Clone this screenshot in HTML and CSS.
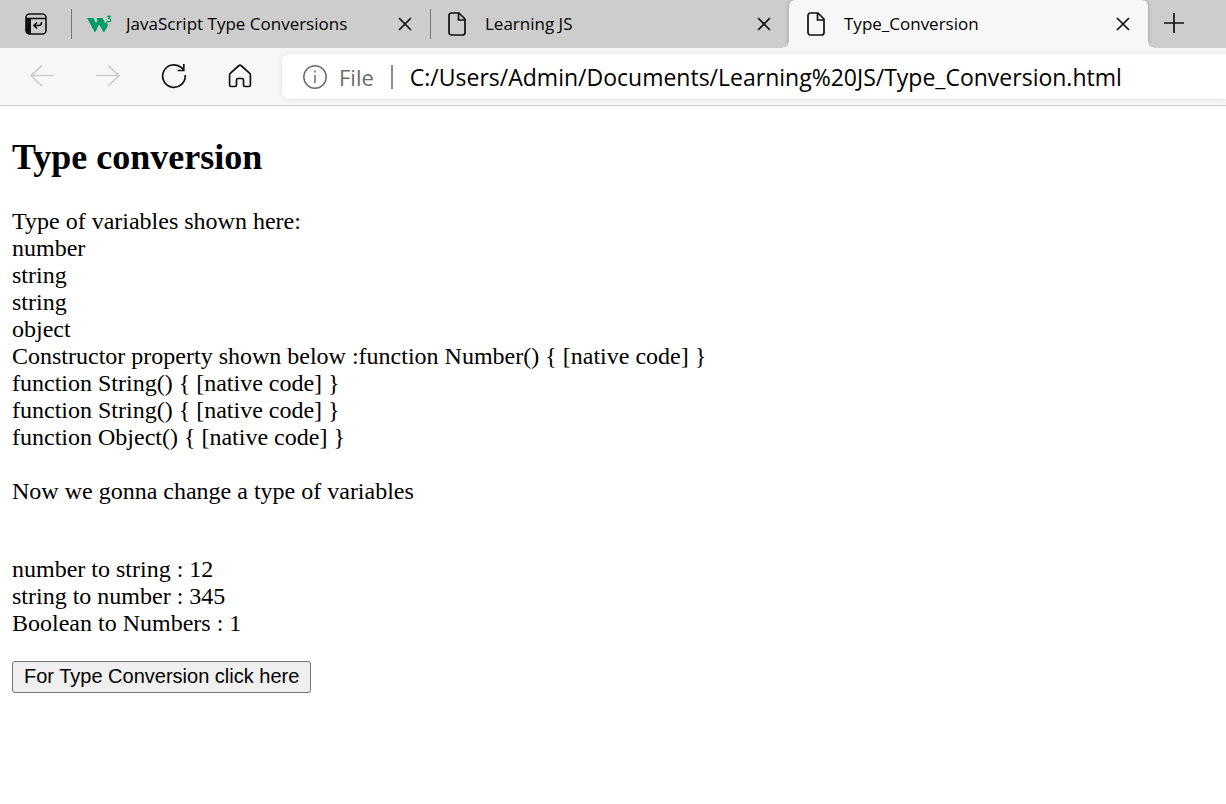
FILE: index.html
```html
<!DOCTYPE html>
<html lang="en">
<head>
<meta charset="utf-8">
<title>Type_Conversion</title>
<link rel="stylesheet" href="styles.css">
</head>
<body>
<header class="browser">
  <div class="tabstrip">
    <button class="tab-actions" aria-label="Tab actions">
      <svg width="22" height="22" viewBox="0 0 22 22" fill="none" stroke="#111" stroke-width="1.6"><rect x="1" y="1" width="20" height="20" rx="3.5"/><path d="M1 5.5h20"/><path d="M1 6h5v15H4a3 3 0 0 1-3-3z" fill="#111" stroke="none"/><path d="M16.500 9v.5q0 3-3 3H9M12 9.500l-3 3 3 3"/></svg>
    </button>
    <div class="tab">
      <svg class="favicon" width="25" height="20" viewBox="0 0 25 20"><path d="M0 4h6.500l2.500 5 1.500-2.500L9.500 4h6l3 5.500 1.200-2.500 1.300 4.500-3.700 6.500h-.8L12 10.500 8.500 18h-1z" fill="#059c68"/><path d="M20 2.300h3.300l-1.800 2.200q2.200 0 2.200 1.700t-2 1.500q-1.200 0-1.800-.7" fill="none" stroke="#059c68" stroke-width="1.200"/></svg>
      <span class="tab-title">JavaScript Type Conversions</span>
      <button class="close" aria-label="Close JavaScript Type Conversions"><svg width="14" height="14" viewBox="0 0 14 14"><path d="M1 1l12 12M13 1L1 13"/></svg></button>
    </div>
    <div class="tab">
      <svg class="favicon page-icon" width="25" height="24" viewBox="0 0 25 24"><path d="M5.500 1H13l6 6v13.500a2.500 2.500 0 0 1-2.500 2.500h-11A2.500 2.500 0 0 1 3 20.500v-17A2.500 2.500 0 0 1 5.500 1zM12.500 1v7H19"/></svg>
      <span class="tab-title">Learning JS</span>
      <button class="close" aria-label="Close Learning JS"><svg width="14" height="14" viewBox="0 0 14 14"><path d="M1 1l12 12M13 1L1 13"/></svg></button>
    </div>
    <div class="tab active">
      <svg class="favicon page-icon" width="25" height="24" viewBox="0 0 25 24"><path d="M5.500 1H13l6 6v13.500a2.500 2.500 0 0 1-2.500 2.500h-11A2.500 2.500 0 0 1 3 20.500v-17A2.500 2.500 0 0 1 5.500 1zM12.500 1v7H19"/></svg>
      <span class="tab-title">Type_Conversion</span>
      <button class="close" aria-label="Close Type_Conversion"><svg width="14" height="14" viewBox="0 0 14 14"><path d="M1 1l12 12M13 1L1 13"/></svg></button>
    </div>
    <div class="strip-end">
      <button class="new-tab" aria-label="New tab"><svg width="22" height="22" viewBox="0 0 22 22"><path d="M11 1v20M1 11h20" stroke="#111" stroke-width="1.700"/></svg></button>
    </div>
  </div>
  <div class="toolbar">
    <nav class="nav">
      <button class="nav-button" aria-label="Back" disabled><svg width="26" height="26" viewBox="0 0 26 26"><path d="M25 12.500H2M13 2.500l-11 10 11 10.500"/></svg></button>
      <button class="nav-button" aria-label="Forward" disabled><svg width="26" height="26" viewBox="0 0 26 26"><path d="M1 12.500h23M13 2.500l11 10L13 23"/></svg></button>
      <button class="nav-button" aria-label="Refresh"><svg width="26" height="26" viewBox="0 0 26 26"><path d="M24.200 12A11.300 11.300 0 1 1 20.500 4.700l2.300 2.300M22.800 1v6.500H16.500"/></svg></button>
      <button class="nav-button" aria-label="Home"><svg width="26" height="26" viewBox="0 0 26 26"><path d="M12 2.500q1-.9 2 0l8.500 7.500q.9.900.9 2V22q0 1.500-1.500 1.500H18q-1.500 0-1.500-1.500v-5q0-1.500-1.500-1.500h-4q-1.500 0-1.500 1.500v5q0 1.500-1.500 1.500H4.100q-1.500 0-1.500-1.500V12q0-1.100.9-2z"/></svg></button>
    </nav>
    <div class="address">
      <svg class="info" width="26" height="26" viewBox="0 0 26 26"><circle cx="13" cy="13" r="11.200"/><path d="M13 11v8M13 6.500v2"/></svg>
      <label class="scheme" for="url">File</label>
      <input class="url" id="url" type="text" value="C:/Users/Admin/Documents/Learning%20JS/Type_Conversion.html">
    </div>
  </div>
</header>
<main class="page">
  <h2 class="heading">Type conversion</h2>
  <p class="types">Type of variables shown here:<br>number<br>string<br>string<br>object<br>Constructor property shown below :function Number() { [native code] }<br>function String() { [native code] }<br>function String() { [native code] }<br>function Object() { [native code] }<br><br>Now we gonna change a type of variables</p>
  <p class="results">number to string : 12<br>string to number : 345<br>Boolean to Numbers : 1</p>
  <button class="convert">For Type Conversion click here</button>
</main>
</body>
</html>
```
FILE: styles.css
```css
* {
  box-sizing: border-box;
}

body {
  margin: 0;
  background: #fff;
  color: #000;
}

.browser {
  font-family: "Open Sans", "Noto Sans", sans-serif;
  background: #f7f7f7;
  border-bottom: 1px solid #d0d0d0;
}

.browser button {
  display: flex;
  align-items: center;
  justify-content: center;
  padding: 0;
  border: 0;
  background: none;
}

.tabstrip {
  display: flex;
  height: 48px;
  overflow: hidden;
  background: #cdcdcd;
}

.browser .tab-actions {
  flex: 0 0 71px;
}

.tab {
  flex: 0 1 359px;
  min-width: 0;
  display: flex;
  align-items: center;
  padding: 0 16px;
  background: linear-gradient(#767676, #767676) left center / 1px 30px no-repeat;
}

.tab.active {
  position: relative;
  background: #f7f7f7;
  border-radius: 6px 6px 0 0;
  box-shadow: 0 0 4px rgba(0, 0, 0, 0.25);
}

/* Curved feet joining the active tab to the toolbar */
.tab.active::before,
.tab.active::after {
  content: "";
  position: absolute;
  bottom: 0;
  width: 6px;
  height: 6px;
}

.tab.active::before {
  right: 100%;
  background: radial-gradient(circle at 0 0, transparent 5px, #f7f7f7 6px);
}

.tab.active::after {
  left: 100%;
  background: radial-gradient(circle at 100% 0, transparent 5px, #f7f7f7 6px);
}

.favicon {
  flex: none;
  margin-right: 14px;
}

.page-icon,
.close svg {
  fill: none;
  stroke: #111;
  stroke-width: 1.7;
}

.tab-title {
  flex: 1;
  overflow: hidden;
  white-space: nowrap;
  font-size: 17px;
  line-height: 24px;
}

.close {
  width: 18px;
  height: 24px;
}

.strip-end {
  flex: 1 0 52px;
  display: flex;
  align-items: center;
  padding: 0 15px 2px;
}

.toolbar {
  display: flex;
  height: 57px;
  padding: 6px 0;
}

.nav {
  flex: 0 0 282px;
  display: flex;
  padding: 0 0 2px 9px;
}

.nav-button {
  width: 66px;
}

.nav-button svg {
  fill: none;
  stroke: #111;
  stroke-width: 1.7;
}

.nav-button:disabled svg {
  stroke: #cecece;
}

.address {
  flex: 1;
  min-width: 0;
  display: flex;
  align-items: center;
  padding-left: 20px;
  background: #fff;
  border-radius: 6px 0 0 6px;
  box-shadow: 0 0 5px rgba(0, 0, 0, 0.1);
}

.info {
  fill: none;
  stroke: #6c6c6c;
  stroke-width: 1.5;
}

.scheme {
  margin-left: 11px;
  padding-right: 17px;
  border-right: 2px solid #8c8c8c;
  color: #6c6c6c;
  font-size: 22px;
  line-height: 24px;
}

.url {
  flex: 1;
  min-width: 0;
  padding: 0 0 0 17px;
  border: 0;
  outline: 0;
  background: none;
  font-family: inherit;
  font-size: 23px;
  line-height: 30px;
}

.page {
  padding: 30px 12px;
  font-family: "Liberation Serif", "Times New Roman", serif;
  font-size: 24px;
  line-height: 27px;
}

.heading {
  margin: 0 0 30px;
  font-size: 36px;
  line-height: 42px;
}

.types {
  margin: 0 0 51px;
}

.results {
  margin: 0 0 24px;
}

.convert {
  height: 32px;
  padding: 0 11px 2px;
  border: 1px solid #767676;
  border-radius: 3px;
  background: #efefef;
  color: #000;
  font-family: "Liberation Sans", Arial, sans-serif;
  font-size: 20px;
  line-height: 28px;
}
```
